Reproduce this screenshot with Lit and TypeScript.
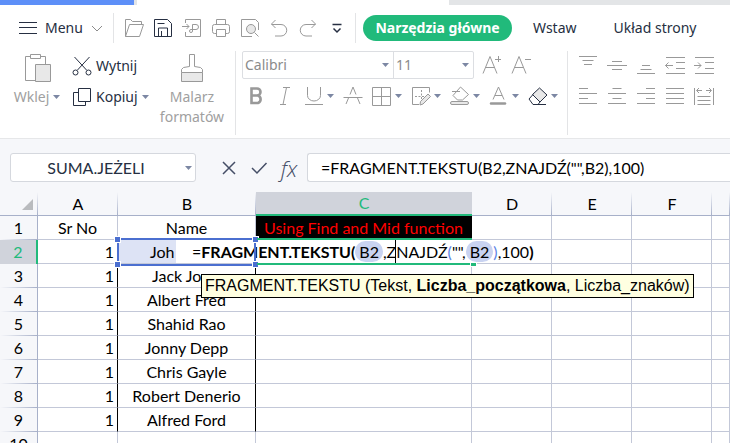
import { LitElement, html, css, svg, nothing, TemplateResult, SVGTemplateResult } from "lit";
import { customElement } from "lit/decorators.js";
import { classMap } from "lit/directives/class-map.js";

const icons: Record<string, SVGTemplateResult> = {
  menu: svg`<path d="M1 4.5h18M1 9.5h18M1 15.5h18"/>`,
  open: svg`<path d="M17.5 6.5v-3h-9l-2-2h-5v17h14l4-12H5.5l-4 12"/>`,
  save: svg`<path d="M1.5 1.5h13l4 4v13h-17zM5.5 18v-8h9v8M8.5 18v-5M4.5 5.5h7"/>`,
  export: svg`<path d="M3.5 5V1.5h15v17h-15V14M0 8.500h7M4.500 6l2.500 2.500L4.500 11M10.500 6.500h3.500a2.500 2.500 0 0 1 0 5h-5a1.500 1.500 0 1 0 1.500 1.500z"/>`,
  print: svg`<path d="M5.500 6.500v-5h9v5M5.500 15.500h-2a2 2 0 0 1-2-2v-5a2 2 0 0 1 2-2h13a2 2 0 0 1 2 2v5a2 2 0 0 1-2 2h-2M5.500 11.500h9v7h-9z"/>`,
  preview: svg`<path d="M12 18.500H1.500v-17h14l3 3V12"/><circle cx="11" cy="11" r="4.500" class="soft"/><path d="M14.500 14.500l4 4"/>`,
  undo: svg`<path d="M6.500 2l-4 4 4 4M2.500 6.500H12a5.500 5.500 0 0 1 0 11.500H6"/>`,
  redo: svg`<path d="M13.500 2l4 4-4 4M17.500 6.500H8A5.500 5.500 0 0 0 8 18h6"/>`,
  more: svg`<path d="M5.500 6.500h9M6.500 10.500l3.500 3.500 3.500-3.500" stroke-width="1.500"/>`,
  cut: svg`<path d="M2.500 1l12 13M17.500 1l-12 13"/><circle cx="3.500" cy="16.500" r="2.500"/><circle cx="16.500" cy="16.500" r="2.500"/>`,
  copy: svg`<path d="M6.500 1.500h12v13h-12zM6.500 5.500h-5v13h12v-4"/>`,
  bold: svg`<path d="M5.500 2.500h5.500a3.500 3.500 0 0 1 0 7H5.500zM5.500 9.500h6.500a4 4 0 0 1 0 7.500H5.500z" stroke-width="2.600"/>`,
  italic: svg`<path d="M8 1.500h7M5 18.500h6M11.500 1.500l-3.500 17"/>`,
  underline: svg`<path d="M3.500 1v8.500a6.500 5.500 0 0 0 13 0V1M1 18.500h18"/>`,
  strike: svg`<path d="M0.500 11.500h19M10 1L7 8.500M5.500 12L3 18M10 1l3 7.500M14.500 12l2.500 6"/>`,
  borders: svg`<path d="M0.500 1.500h18v18h-18zM9.500 1.500v18M0.500 10.500h18"/>`,
  cell: svg`<path d="M8 18.500H1.500v-17h17v5M1.500 4v13"/><path d="M4 10.500h9M10.500 4v11" stroke-dasharray="2 1.500"/><path d="M17 8l2.500 2.500-7.500 7.500-3 1 .500-3.500z" class="soft"/>`,
  fill: svg`<path d="M2 5.500h8M10.500 1l8 7.500-6 5.500h-5l-4.500-4.500z"/><rect x="0.500" y="15.500" width="18" height="3" rx="1.500" class="soft"/>`,
  color: svg`<path d="M9.500 1L4 13.500M9.500 1L15 13.500M6 9.500h7"/><path d="M2 17.500h14" stroke-width="2.500" stroke-linecap="round"/>`,
  eraser: svg`<path d="M11.500 2l7.500 7-7 7-7.500-7.500z" class="soft"/><path d="M5 8.500L1 13l4 5.500h5l2-2.500M9 18.500h9"/>`,
  grow: svg`<path d="M1 18.500L8 1.500l7 17M4 12.500h8M13 4.500h6M16.500 1v6"/>`,
  shrink: svg`<path d="M1 18.500L8 1.500l7 17M4 12.500h8M14 4.500h6"/>`,
  top: svg`<path d="M1 1.500h18M4.500 5.500h11M6 9.500h8"/>`,
  middle: svg`<path d="M5 6.500h10M0 10.500h20M5 14.500h10"/>`,
  bottom: svg`<path d="M6 10.500h8M4.500 14.500h11M1 18.500h18"/>`,
  outdent: svg`<path d="M1 2.500h19M11 7.500h9M11 13.500h9M1 18.500h19M0.500 10.500H8M3.500 7.500l-3 3 3 3"/>`,
  indent: svg`<path d="M1 2.500h19M11 7.500h9M11 13.500h9M1 18.500h19M0 10.500h7M4 7.500l3 3-3 3"/>`,
  left: svg`<path d="M1 2.500h9M1 7.500h18M1 12.500h9M1 17.500h18"/>`,
  center: svg`<path d="M5.500 2.500h9M1 7.500h18M5.500 12.500h9M1 17.500h18"/>`,
  right: svg`<path d="M10 2.500h9M1 7.500h18M10 12.500h9M1 17.500h18"/>`,
  justify: svg`<path d="M1 2.500h18M1 7.500h18M1 12.500h18M1 17.500h18"/>`,
  spread: svg`<path d="M0.500 2v17M19.500 2v17M3.500 10.500h13M3.500 14.500h13M3.500 18.500h13M3 4.500h5M5 2l-2.500 2.500L5 7M12 4.500h5M15 2l2.500 2.500L15 7"/>`,
};

const icon = (name: string) =>
  html`<svg class="icon" viewBox="0 0 20 20" aria-hidden="true">${icons[name]}</svg>`;

const caret = html`<svg class="caret" viewBox="0 0 7 4" aria-hidden="true"><path d="M0 0h7L3.500 4z"/></svg>`;

interface Tool { name: string; label: string; menu?: boolean; dark?: boolean }

const tool = (t: Tool): TemplateResult => html`
  <button class=${classMap({ tool: true, wide: !!t.menu, dark: !!t.dark })} aria-label=${t.label}>
    ${icon(t.name)}${t.menu ? caret : nothing}
  </button>`;

const quickTools: Tool[] = [
  { name: "open", label: "Otwórz" },
  { name: "save", label: "Zapisz", dark: true },
  { name: "export", label: "Eksportuj do PDF" },
  { name: "print", label: "Drukuj" },
  { name: "preview", label: "Podgląd wydruku" },
  { name: "undo", label: "Cofnij" },
  { name: "redo", label: "Ponów" },
  { name: "more", label: "Dostosuj", dark: true },
];
const fontTools: Tool[] = [
  { name: "bold", label: "Pogrubienie" },
  { name: "italic", label: "Kursywa" },
  { name: "underline", label: "Podkreślenie", menu: true },
  { name: "strike", label: "Przekreślenie" },
  { name: "borders", label: "Obramowanie", menu: true },
  { name: "cell", label: "Styl komórki", menu: true },
  { name: "fill", label: "Wypełnienie", menu: true },
  { name: "color", label: "Kolor czcionki", menu: true },
  { name: "eraser", label: "Wyczyść", menu: true, dark: true },
];
const alignTools: Tool[][] = [
  [
    { name: "top", label: "Do góry" },
    { name: "middle", label: "Do środka w pionie" },
    { name: "bottom", label: "Do dołu" },
    { name: "outdent", label: "Zmniejsz wcięcie" },
    { name: "indent", label: "Zwiększ wcięcie" },
  ],
  [
    { name: "left", label: "Do lewej" },
    { name: "center", label: "Do środka" },
    { name: "right", label: "Do prawej" },
    { name: "justify", label: "Wyjustuj" },
    { name: "spread", label: "Rozłóż" },
  ],
];

@customElement("sheet-ribbon")
export class SheetRibbon extends LitElement {
  static styles = css`
    :host { display: block; background: #fff; color: #262f42; font: 14px/20px "Noto Sans", "Open Sans", sans-serif; border-bottom: 1px solid #e6e7e9; }
    button, select { font: inherit; color: inherit; border: 0; background: none; margin: 0; padding: 0; }
    .tabs { display: flex; height: 5px; }
    .active { width: 134px; background: #5d8ff8; border-right: 3px solid #e3e5e7; }
    .document { flex: 0 0 312px; }
    .rest { flex: 1; background: #e3e5e7; }
    .menubar { display: flex; align-items: center; height: 30px; padding: 8px 0 8px 18px; white-space: nowrap; }
    .menu { display: flex; align-items: center; width: 95px; }
    .menu .label { margin: 0 8px 0 7px; }
    .chevron { width: 12px; height: 7px; fill: none; stroke: #8b8b8b; }
    .rule { width: 1px; align-self: stretch; background: #e3e4e6; }
    .quick { display: flex; margin: 0 3px 0 6px; }
    .icon { width: 20px; height: 20px; fill: none; stroke: #999; stroke-width: 1; flex: none; }
    .soft { fill: #e8e8e8; }
    .menu .icon, .dark .icon { stroke: #262f42; }
    .caret { width: 7px; height: 4px; fill: #7c87a3; flex: none; }
    .home { height: 26px; width: 149px; margin: 0 0 0 7px; border-radius: 13px; background: #21ba7b; color: #fff; font-weight: 700; }
    .plain { margin-left: 21px; }
    .plain + .plain { margin-left: 37px; }
    .ribbon { display: flex; height: 84px; padding-bottom: 3px; white-space: nowrap; }
    .clipboard { display: grid; grid-template-columns: 50px 86px 72px; column-gap: 4px; padding-left: 12px; box-sizing: border-box; width: 235px; }
    .stack { display: flex; flex-direction: column; align-items: center; gap: 4px; padding-top: 2px; color: #a0a0a0; }
    .stack .lines { display: block; }
    .big { width: 30px; height: 30px; fill: none; stroke: #999; stroke-width: 1; }
    .with-caret { display: flex; align-items: center; gap: 4px; }
    .pair { display: grid; grid-template-rows: 30px 32px; align-content: start; }
    .pair button { display: flex; align-items: center; gap: 4px; padding-left: 6px; }
    .group { display: grid; grid-template-rows: 28px 28px; row-gap: 3px; align-content: start; }
    .fonts { padding: 0 4px 0 6px; }
    .aligns { padding-left: 6px; }
    .row { display: flex; align-items: center; }
    .tool { display: flex; align-items: center; gap: 3px; width: 29px; height: 28px; padding-left: 4px; }
    .wide { width: 39px; }
    .boxes { display: flex; box-sizing: border-box; width: 232px; height: 28px; border: 1px solid #dcdee2; border-radius: 2px; margin-right: 4px; color: #8b8b8b; }
    .field { display: grid; align-items: center; }
    .field > * { grid-area: 1 / 1; }
    .field select { appearance: none; height: 26px; padding-left: 2px; width: 100%; }
    .field .caret { justify-self: end; margin-right: 4px; pointer-events: none; }
    .family { width: 150px; border-right: 1px solid #dcdee2; }
    .size { flex: 1; }
  `;

  render() {
    return html`
      <div class="tabs"><span class="active"></span><span class="document"></span><span class="rest"></span></div>
      <nav class="menubar">
        <button class="menu">
          ${icon("menu")}<span class="label">Menu</span>
          <svg class="chevron" viewBox="0 0 12 7" aria-hidden="true"><path d="M1 1l5 5 5-5"/></svg>
        </button>
        <span class="rule"></span>
        <div class="quick">${quickTools.map(tool)}</div>
        <span class="rule"></span>
        <button class="home">Narzędzia główne</button>
        <button class="plain">Wstaw</button>
        <button class="plain">Układ strony</button>
      </nav>
      <div class="ribbon">
        <div class="clipboard">
          <button class="stack">
            <svg class="big" viewBox="0 0 30 30" aria-hidden="true">
              <path d="M8.500 3.500h-5v24h10M18.500 3.500h5v8M8.500 1.500h10v4h-10z"/><path class="soft" d="M13.500 11.500h15v17h-15z"/>
            </svg>
            <span class="with-caret">Wklej ${caret}</span>
          </button>
          <div class="pair">
            <button class="dark">${icon("cut")}Wytnij</button>
            <button class="dark">${icon("copy")}Kopiuj ${caret}</button>
          </div>
          <button class="stack">
            <svg class="big" viewBox="0 0 30 30" aria-hidden="true">
              <path class="soft" d="M4.500 19.500h21v9h-21z"/><path d="M4.500 19.500v-3l2-2 6-1v-12h5v12l6 1 2 2v3"/>
            </svg>
            <span class="lines">Malarz<br>formatów</span>
          </button>
        </div>
        <span class="rule"></span>
        <div class="group fonts">
          <div class="row">
            <div class="boxes">
              <div class="field family"><select aria-label="Czcionka"><option>Calibri</option></select>${caret}</div>
              <div class="field size"><select aria-label="Rozmiar"><option>11</option></select>${caret}</div>
            </div>
            ${tool({ name: "grow", label: "Zwiększ czcionkę" })}${tool({ name: "shrink", label: "Zmniejsz czcionkę" })}
          </div>
          <div class="row">${fontTools.map(tool)}</div>
        </div>
        <span class="rule"></span>
        <div class="group aligns">${alignTools.map((r) => html`<div class="row">${r.map(tool)}</div>`)}</div>
      </div>`;
  }
}

@customElement("formula-bar")
export class FormulaBar extends LitElement {
  static styles = css`
    :host { display: flex; height: 29px; padding: 14px 0 10px 10px; background: #f6f7fa; color: #000; font: 16px/20px Lato, Carlito, sans-serif; }
    .name { display: grid; align-items: center; box-sizing: border-box; width: 186px; border: 1px solid #d5d8de; border-radius: 3px; background: #fff; }
    .name > * { grid-area: 1 / 1; }
    select { appearance: none; width: 100%; border: 0; background: none; font: inherit; color: #262f42; text-align-last: center; padding: 0 18px 0 4px; }
    .caret { width: 7px; height: 4px; justify-self: end; margin-right: 3px; pointer-events: none; }
    .actions { display: flex; align-items: center; gap: 10px; margin: 0 8px 0 23px; }
    button { width: 20px; height: 24px; padding: 0; border: 0; background: none; }
    svg { width: 20px; height: 20px; fill: none; stroke: #454e66; stroke-width: 1.500; display: block; }
    .name svg { width: 7px; height: 4px; stroke: none; fill: #7c87a3; }
    .fx { color: #454e66; font: italic 300 22px/22px "Open Sans", "Noto Sans", sans-serif; }
    .formula { flex: 1; min-width: 0; border: 1px solid #d5d8de; border-right: 0; border-radius: 3px 0 0 3px; background: #fff; padding: 0 13px; font: inherit; color: #000; }
  `;

  render() {
    return html`
      <div class="name">
        <select aria-label="Pole nazwy"><option>SUMA.JEŻELI</option></select>
        <svg class="caret" viewBox="0 0 7 4" aria-hidden="true"><path d="M0 0h7L3.500 4z"/></svg>
      </div>
      <div class="actions">
        <button aria-label="Anuluj"><svg viewBox="0 0 20 20"><path d="M4 4l12 12M16 4L4 16"/></svg></button>
        <button aria-label="Zatwierdź"><svg viewBox="0 0 20 20"><path d="M3 10l5 5L17.500 5"/></svg></button>
        <button class="fx" aria-label="Wstaw funkcję">fx</button>
      </div>
      <input class="formula" aria-label="Formuła" value='=FRAGMENT.TEKSTU(B2,ZNAJDŹ("",B2),100)'>`;
  }
}

const names = ["Joh", "Jack Jo", "Albert Fred", "Shahid Rao", "Jonny Depp", "Chris Gayle", "Robert Denerio", "Alfred Ford"];
const columns = ["A", "B", "C", "D", "E", "F", ""];

@customElement("sheet-grid")
export class SheetGrid extends LitElement {
  static styles = css`
    :host { display: block; background: #fff; color: #000; font: 16px/22px Lato, Carlito, sans-serif; }
    table { width: 100%; table-layout: fixed; border-collapse: separate; border-spacing: 0; }
    .c-head { width: 38px; }
    .c-std { width: 80px; }
    .c-b { width: 138px; }
    .c-c { width: 216px; }
    th, td { box-sizing: border-box; height: 24px; padding: 0; font-weight: 400; text-align: center; white-space: nowrap; }
    thead th { border-bottom: 1px solid #a7b0c9; background: linear-gradient(#f6f7fa, #a7b0c9) right / 1px 100% no-repeat #f6f7fa; }
    thead .selected { background: #d0d3db; color: #21ba7b; border-bottom: 2px solid #21ba7b; }
    .corner svg { display: block; width: 11px; height: 11px; margin: 2px 5px 0 auto; fill: #b9bbbe; }
    tbody th { border-right: 1px solid #a7b0c9; background: linear-gradient(90deg, #f6f7fa, #a7b0c9) bottom / 100% 1px no-repeat #f6f7fa; }
    tbody .selected { border-right: 2px solid #21ba7b; background: #d0d3db; color: #21ba7b; }
    td { border-right: 1px solid #c3c8d8; border-bottom: 1px solid #c3c8d8; }
    .number { text-align: right; padding-right: 3px; }
    .inked { border-right-color: #000; }
    .title { background: #000; border-color: #000; color: #f00; }
    .source { position: relative; background: #dde3f5; text-align: left; padding-left: 32px; }
    .covered { text-align: left; padding-left: 34px; }
    .target { position: relative; }
    .frame { position: absolute; inset: -2px -1px -3px -1px; border: 2px solid #4b6fd0; pointer-events: none; z-index: 3; }
    .frame.result { inset: -2px -1px -2px 1px; border-width: 2px 0; border-color: #21ba7b; z-index: 3; }
    .grip { position: absolute; width: 5px; height: 5px; background: #4b6fd0; outline: 1px solid #fff; }
    .nw { left: -4px; top: -3px; }
    .ne { right: -4px; top: -3px; }
    .sw { left: -4px; bottom: -3px; }
    .se { right: -4px; bottom: -3px; }
    .result .grip { background: #21ba7b; height: 3px; }
    .editor { position: absolute; left: -80px; top: 0; height: 23px; padding: 0 2px 0 16px; background: #fff; z-index: 2; display: flex; align-items: center; white-space: pre; outline: 0; }
    .ref { background: #c9d3f1; border-radius: 11px; padding: 0 4px; line-height: 21px; }
    .paren { color: #5c83e6; }
    .cursor { position: absolute; left: 219px; top: 0; width: 1px; height: 23px; background: #000; }
    .hint { position: absolute; left: -55px; top: 34px; z-index: 4; border: 1px solid #000; background: #ffffe1; padding: 0 3px; font: 16px/22px "Liberation Sans", Arial, sans-serif; }
  `;

  private editing() {
    return html`
      <div class="editor" role="textbox" contenteditable="true" spellcheck="false" aria-label="C2">=<b>FRAGMENT.TEKSTU(</b><span class="ref">B2</span>,ZNAJDŹ<span class="paren">(</span>"",<span class="ref">B2</span><span class="paren">)</span>,100<b>)</b><span class="cursor"></span></div>
      <div class="frame result"><i class="grip se"></i></div>
      <div class="hint" role="tooltip">FRAGMENT.TEKSTU (Tekst, <b>Liczba_początkowa</b>, Liczba_znaków)</div>`;
  }

  private row(name: string, i: number) {
    const ink = i > 0;
    return html`
      <tr>
        <th class=${i === 0 ? "selected" : ""} scope="row">${i + 2}</th>
        <td class=${classMap({ number: true, inked: ink })}>1</td>
        <td class=${classMap({ inked: ink, source: i === 0, covered: i === 1 })}>${name}${i === 0
          ? html`<div class="frame"><i class="grip nw"></i><i class="grip ne"></i><i class="grip sw"></i><i class="grip se"></i></div>`
          : nothing}</td>
        <td class=${i === 0 ? "target" : ""}>${i === 0 ? this.editing() : nothing}</td>
        <td></td><td></td><td></td><td></td>
      </tr>`;
  }

  render() {
    return html`
      <table>
        <colgroup>
          <col class="c-head"><col class="c-std"><col class="c-b"><col class="c-c"><col class="c-std"><col class="c-std"><col class="c-std"><col>
        </colgroup>
        <thead>
          <tr>
            <th class="corner"><svg viewBox="0 0 11 11" aria-hidden="true"><path d="M11 0v11H0z"/></svg></th>
            ${columns.map((c) => html`<th class=${c === "C" ? "selected" : ""} scope="col">${c}</th>`)}
          </tr>
        </thead>
        <tbody>
          <tr><th scope="row">1</th><td>Sr No</td><td>Name</td><td class="title">Using Find and Mid function</td><td></td><td></td><td></td><td></td></tr>
          ${names.map((n, i) => this.row(n, i))}
          <tr><th scope="row">10</th><td></td><td></td><td></td><td></td><td></td><td></td><td></td></tr>
        </tbody>
      </table>`;
  }
}

@customElement("app-root")
export class AppRoot extends LitElement {
  static styles = css`
    :host { display: block; height: 100vh; overflow: hidden; background: #fff; }
  `;

  render() {
    return html`<sheet-ribbon></sheet-ribbon><formula-bar></formula-bar><sheet-grid></sheet-grid>`;
  }
}
